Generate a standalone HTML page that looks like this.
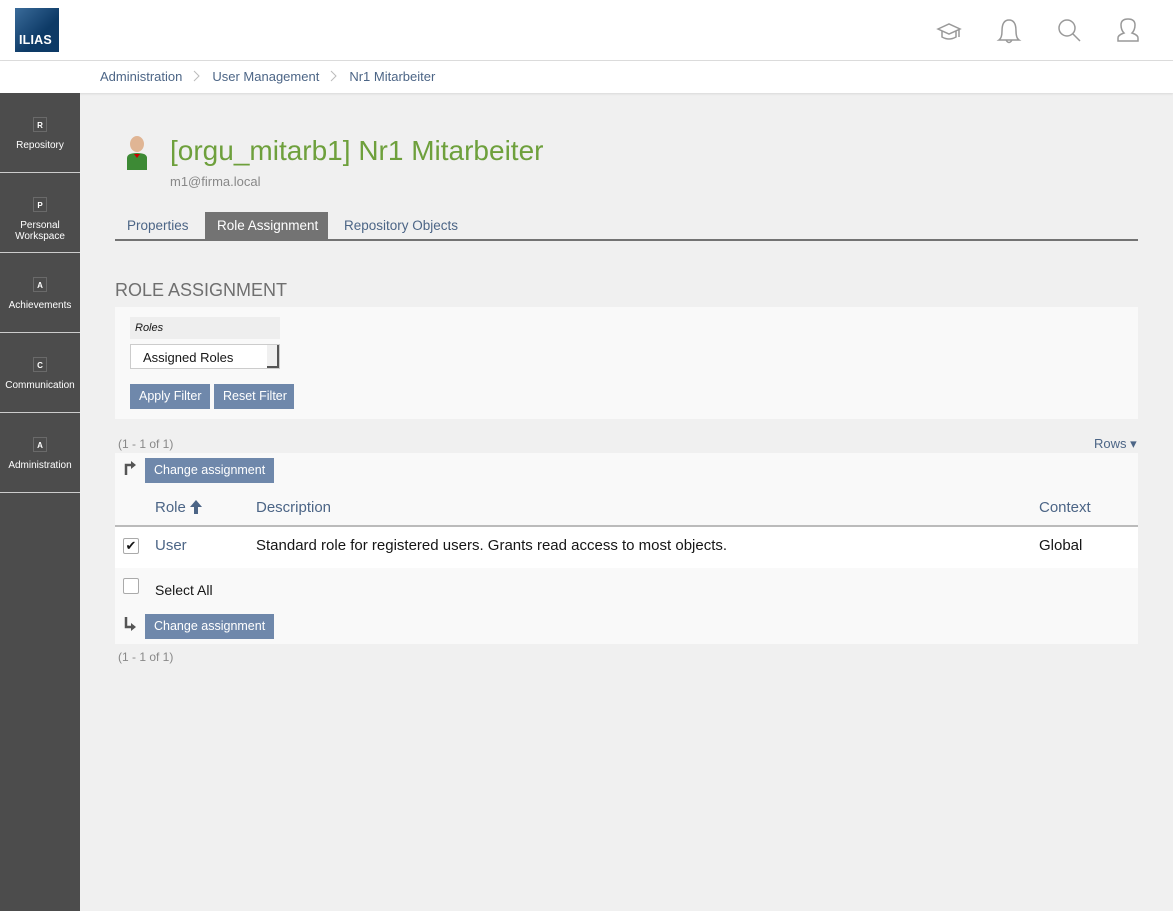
<!DOCTYPE html>
<html><head><meta charset="utf-8"><style>
*{box-sizing:border-box;margin:0;padding:0}
body{width:1173px;height:911px;overflow:hidden;background:#f0f0f0;font-family:"Liberation Sans",sans-serif;color:#161616;position:relative}
.abs{position:absolute;white-space:nowrap}
#hdr{left:0;top:0;width:1173px;height:61px;background:#fff;border-bottom:1px solid #ddd}
#logo{left:15px;top:8px;width:44px;height:44px;background:linear-gradient(135deg,#3a6b9a,#0d3a66 60%);color:#fff;font-weight:bold;font-size:12.5px;padding:25px 0 0 4px;letter-spacing:.2px}
#bc{left:0;top:61px;width:1173px;height:32px;background:#fff;font-size:13px;color:#4c6586;padding:8px 0 0 100px;box-shadow:0 1px 2px rgba(0,0,0,.1)}
#side{left:0;top:93px;width:80px;height:818px;background:#4c4c4c}
.it{width:80px;height:80px;border-bottom:1px solid #ccc;color:#fff;text-align:center;font-size:10px;padding-top:24px;line-height:11px}
.it b{display:block;font-size:8px;margin:0 auto 8px;width:14px;height:15px;line-height:15px;border:1px solid #6a6a6a}
.tab{top:212px;height:28px;font-size:13.5px;padding:6px 12px;color:#4c6586}
.btn{background:#6f88ab;color:#fff;font-size:12.5px;height:25px;line-height:25px;padding:0 9px}
</style></head><body>
<div id="hdr" class="abs"></div>
<div id="logo" class="abs">ILIAS</div>
<svg class="abs" style="left:930px;top:14px" width="230" height="32" fill="none" stroke="#999" stroke-width="1.5">
<path d="M8 15 L19 10 L30 15 L19 20 Z M12 17 V23 Q19 27 26 23 V17 M29 15 V23"/>
<path d="M69 26 Q72 24 72 17 Q72 6 79 6 Q86 6 86 17 Q86 24 89 26 Z M76 26 Q79 31 82 26"/>
<circle cx="137" cy="14" r="8"/><path d="M143 20 L150 27"/>
<path d="M188 27 V24 Q188 21 194 19 Q191 16 191 11 Q191 5 198 5 Q205 5 205 11 Q205 16 202 19 Q208 21 208 24 V27 Z"/>
</svg>
<div id="bc" class="abs">Administration<svg width="30" height="12" style="vertical-align:-1px"><path d="M12 1 L17 6 L12 11" fill="none" stroke="#bbb"/></svg>User Management<svg width="30" height="12" style="vertical-align:-1px"><path d="M12 1 L17 6 L12 11" fill="none" stroke="#bbb"/></svg>Nr1 Mitarbeiter</div>
<div id="side" class="abs">
<div class="it"><b>R</b>Repository</div>
<div class="it"><b>P</b>Personal<br>Workspace</div>
<div class="it"><b>A</b>Achievements</div>
<div class="it"><b>C</b>Communication</div>
<div class="it"><b>A</b>Administration</div>
</div>
<svg class="abs" style="left:126px;top:136px" width="22" height="34"><ellipse cx="11" cy="8" rx="7" ry="8" fill="#e0b594"/><path d="M1 34 V22 Q1 17 11 17 Q21 17 21 22 V34 Z" fill="#3d8a35"/><path d="M8 18 L11 22 L14 18 Z" fill="#c00"/></svg>
<div class="abs" style="left:170px;top:135px;font-size:28px;color:#6ea03c">[orgu_mitarb1] Nr1 Mitarbeiter</div>
<div class="abs" style="left:170px;top:174px;font-size:13px;color:#888">m1@firma.local</div>
<div class="abs tab" style="left:115px">Properties</div>
<div class="abs tab" style="left:205px;background:#737373;color:#fff;width:123px">Role Assignment</div>
<div class="abs tab" style="left:332px">Repository Objects</div>
<div class="abs" style="left:115px;top:239px;width:1023px;height:2px;background:#737373"></div>
<div class="abs" style="left:115px;top:280px;font-size:18px;color:#6f6f6f">ROLE ASSIGNMENT</div>
<div class="abs" style="left:115px;top:307px;width:1023px;height:112px;background:#f9f9f9"></div>
<div class="abs" style="left:130px;top:317px;width:150px;height:22px;background:#eee;font-size:11px;font-style:italic;padding:5px 5px">Roles</div>
<div class="abs" style="left:130px;top:344px;width:150px;height:25px;background:#fff;border:1px solid #ccc;font-size:13px;padding:5px 12px">Assigned Roles</div>
<div class="abs" style="left:267px;top:345px;width:12px;height:23px;background:#f0f0f0;border-right:2px solid #555;border-bottom:2px solid #555"></div>
<div class="abs btn" style="left:130px;top:384px;width:80px">Apply Filter</div>
<div class="abs btn" style="left:214px;top:384px;width:80px">Reset Filter</div>
<div class="abs" style="left:118px;top:437px;font-size:12px;color:#888">(1 - 1 of 1)</div>
<div class="abs" style="left:1094px;top:436px;font-size:13px;color:#4c6586">Rows ▾</div>
<div class="abs" style="left:115px;top:453px;width:1023px;height:37px;background:#f9f9f9"></div>
<svg class="abs" style="left:123px;top:460px" width="14" height="16"><path d="M3 15 V5 H9" fill="none" stroke="#555" stroke-width="2.5"/><path d="M8 1 L13 5 L8 9 Z" fill="#555"/></svg>
<div class="abs btn" style="left:145px;top:458px;width:129px">Change assignment</div>
<div class="abs" style="left:115px;top:490px;width:1023px;height:37px;background:#f9f9f9;border-bottom:2px solid #bbb;font-size:15px;color:#4c6586">
<span class="abs" style="left:40px;top:9px">Role</span>
<svg class="abs" style="left:74px;top:9px" width="14" height="16"><path d="M7 1 L13 8 H9 V15 H5 V8 H1 Z" fill="#4c6586"/></svg>
<span class="abs" style="left:141px;top:9px">Description</span>
<span class="abs" style="left:924px;top:9px">Context</span></div>
<div class="abs" style="left:115px;top:527px;width:1023px;height:41px;background:#fff;font-size:15px">
<span class="abs" style="left:8px;top:11px;width:16px;height:16px;border:1px solid #aaa;border-radius:2px;font-size:13px;line-height:14px;text-align:center">✔</span>
<span class="abs" style="left:40px;top:10px;color:#4c6586">User</span>
<span class="abs" style="left:141px;top:10px">Standard role for registered users. Grants read access to most objects.</span>
<span class="abs" style="left:924px;top:10px">Global</span></div>
<div class="abs" style="left:115px;top:568px;width:1023px;height:76px;background:#f9f9f9;font-size:14px">
<span class="abs" style="left:8px;top:10px;width:16px;height:16px;border:1px solid #aaa;border-radius:2px;background:#fff"></span>
<span class="abs" style="left:40px;top:14px">Select All</span></div>
<svg class="abs" style="left:123px;top:616px" width="14" height="16"><path d="M3 1 V11 H9" fill="none" stroke="#555" stroke-width="2.5"/><path d="M8 7 L13 11 L8 15 Z" fill="#555"/></svg>
<div class="abs btn" style="left:145px;top:614px;width:129px">Change assignment</div>
<div class="abs" style="left:118px;top:650px;font-size:12px;color:#888">(1 - 1 of 1)</div>
</body></html>
